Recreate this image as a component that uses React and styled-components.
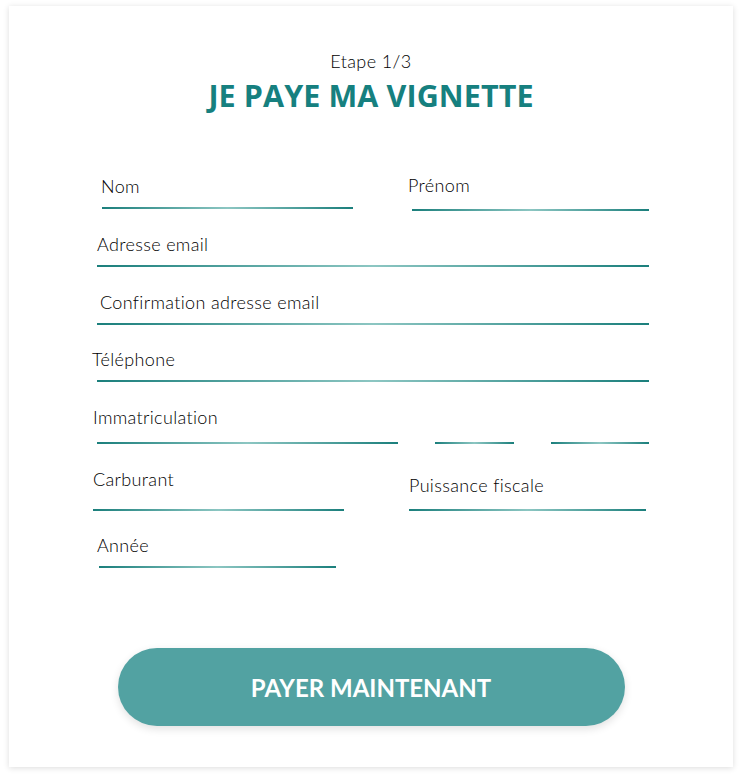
import React from 'react'
import styled, { createGlobalStyle } from 'styled-components'

const GlobalStyle = createGlobalStyle`
  html, body {
    margin: 0;
    padding: 0;
    background: #ffffff;
  }
  body {
    font-family: 'Lato', 'Open Sans', sans-serif;
  }
`

const Page = styled.div`
  padding: 6px 10px 12px 9px;
`

const Card = styled.div`
  width: 724px;
  height: 761px;
  box-sizing: border-box;
  background: #fff;
  box-shadow: 0 1px 6px rgba(0, 0, 0, 0.14);
  display: flex;
  flex-direction: column;
  align-items: stretch;
  padding-top: 45px;
`

const Header = styled.div`
  display: flex;
  flex-direction: column;
  align-items: center;
`

const Step = styled.div`
  font-size: 18px;
  font-weight: 300;
  line-height: 20px;
  color: #000;
  letter-spacing: 0.4px;
`

const Title = styled.h1`
  margin: 4px 0 0;
  font-family: 'Open Sans', sans-serif;
  font-weight: 700;
  font-size: 30.5px;
  line-height: 40px;
  color: #16807f;
  letter-spacing: 0.1px;
`

const Form = styled.div`
  margin-top: 60px;
  padding-left: 83px;
  display: flex;
  flex-direction: column;
`

const Row = styled.div`
  display: flex;
  align-items: flex-start;
  height: ${p => p.$h}px;
`

const Field = styled.div`
  display: flex;
  flex-direction: column;
  margin-left: ${p => p.$left || 0}px;
  margin-top: ${p => p.$top || 0}px;
`

const Label = styled.label`
  font-size: 18px;
  font-weight: 300;
  line-height: 20px;
  color: #000;
  letter-spacing: 0.35px;
  white-space: nowrap;
`

const Line = styled.div`
  height: 1.5px;
  width: ${p => p.$w}px;
  margin-left: ${p => p.$ml || 0}px;
  margin-top: ${p => p.$gap || 0}px;
  background: linear-gradient(to right, #1b7f7c, #8cc6c2 50%, #1b7f7c);
`

const LineGroup = styled.div`
  display: flex;
  gap: 37px;
  margin-left: 4px;
  margin-top: 15px;
`

const Segment = styled(Line)`
  margin: 0;
`

const Button = styled.button`
  align-self: center;
  margin-top: 81px;
  width: 507px;
  height: 78px;
  border: none;
  border-radius: 39px;
  background: #52a2a2;
  color: #fff;
  font-family: 'Lato', sans-serif;
  font-weight: 700;
  font-size: 24px;
  letter-spacing: 0;
  box-shadow: 0 3px 8px rgba(0, 0, 0, 0.12);
  cursor: pointer;
`

export default function App() {
  return (
    <Page>
      <GlobalStyle />
      <Card>
        <Header>
          <Step>Etape 1/3</Step>
          <Title>JE PAYE MA VIGNETTE</Title>
        </Header>
        <Form>
          <Row $h={59}>
            <Field $left={9} $top={1}>
              <Label>Nom</Label>
              <Line $w={251} $ml={1} $gap={11} />
            </Field>
            <Field $left={55}>
              <Label>Prénom</Label>
              <Line $w={237} $ml={4} $gap={14} />
            </Field>
          </Row>
          <Row $h={58}>
            <Field $left={5}>
              <Label>Adresse email</Label>
              <Line $w={552} $gap={11} />
            </Field>
          </Row>
          <Row $h={57}>
            <Field $left={8}>
              <Label>Confirmation adresse email</Label>
              <Line $w={552} $ml={-3} $gap={11} />
            </Field>
          </Row>
          <Row $h={58}>
            <Field>
              <Label>Téléphone</Label>
              <Line $w={552} $ml={5} $gap={11} />
            </Field>
          </Row>
          <Row $h={62}>
            <Field $left={1}>
              <Label>Immatriculation</Label>
              <LineGroup>
                <Segment $w={301} />
                <Segment $w={79} />
                <Segment $w={98} />
              </LineGroup>
            </Field>
          </Row>
          <Row $h={66}>
            <Field $left={1}>
              <Label>Carburant</Label>
              <Line $w={251} $gap={20} />
            </Field>
            <Field $left={65} $top={6}>
              <Label>Puissance fiscale</Label>
              <Line $w={237} $gap={14} />
            </Field>
          </Row>
          <Row $h={32}>
            <Field $left={5}>
              <Label>Année</Label>
              <Line $w={237} $ml={2} $gap={11} />
            </Field>
          </Row>
        </Form>
        <Button>PAYER MAINTENANT</Button>
      </Card>
    </Page>
  )
}
